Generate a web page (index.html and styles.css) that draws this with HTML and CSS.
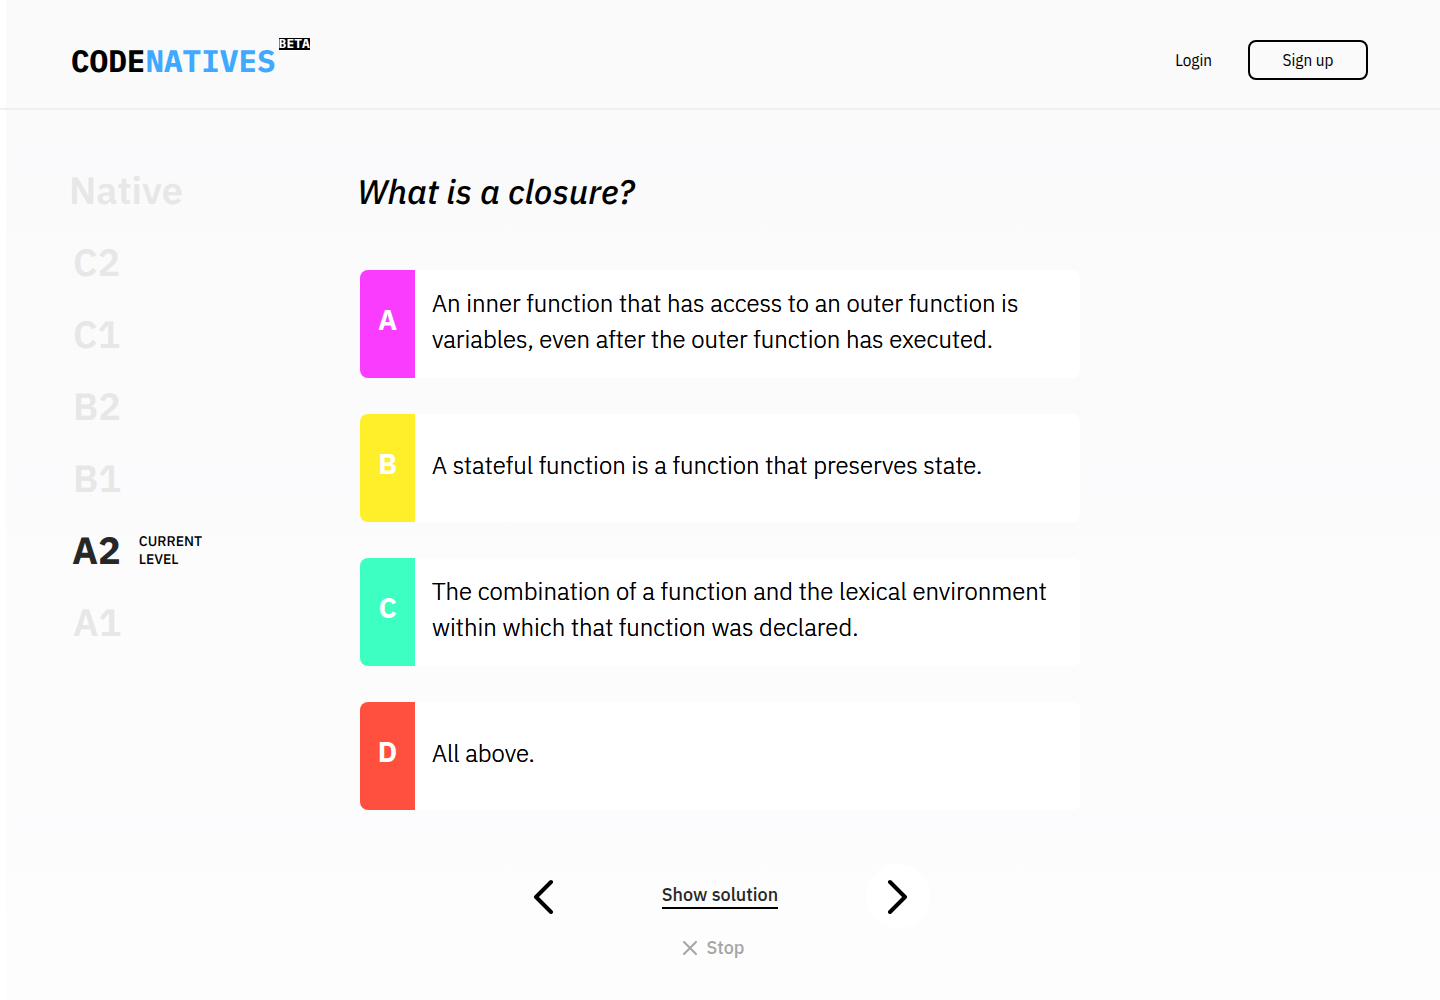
FILE: index.html
```html
<!DOCTYPE html>
<html lang="en">
<head>
<meta charset="utf-8">
<meta name="viewport" content="width=device-width, initial-scale=1">
<title>Code Natives</title>
<link rel="stylesheet" href="styles.css">
</head>
<body>
<header class="header">
  <a class="logo" href="#"><span class="logo-name">CODE<span class="logo-accent">NATIVES</span></span><span class="logo-beta">BETA</span></a>
  <nav class="account">
    <a class="login" href="#">Login</a>
    <button class="signup" type="button">Sign up</button>
  </nav>
</header>
<div class="layout">
  <aside>
    <ol class="levels">
      <li class="level level-native">Native</li>
      <li class="level">C2</li>
      <li class="level">C1</li>
      <li class="level">B2</li>
      <li class="level">B1</li>
      <li class="level level-current">A2 <span class="level-note">CURRENT LEVEL</span></li>
      <li class="level">A1</li>
    </ol>
  </aside>
  <main class="quiz">
    <h1 class="question">What is a closure?</h1>
    <div class="answers">
      <button class="answer" type="button"><span class="letter letter-a">A</span><span class="answer-text">An inner function that has access to an outer function is variables, even after the outer function has executed.</span></button>
      <button class="answer" type="button"><span class="letter letter-b">B</span><span class="answer-text">A stateful function is a function that preserves state.</span></button>
      <button class="answer" type="button"><span class="letter letter-c">C</span><span class="answer-text">The combination of a function and the lexical environment within which that function was declared.</span></button>
      <button class="answer" type="button"><span class="letter letter-d">D</span><span class="answer-text">All above.</span></button>
    </div>
    <div class="controls">
      <button class="arrow" type="button" aria-label="Previous question">
        <svg width="24" height="36" viewBox="0 0 24 36"><path d="M21 4 L6 19 L21 34" /></svg>
      </button>
      <button class="solution" type="button">Show solution</button>
      <button class="arrow arrow-next" type="button" aria-label="Next question">
        <svg width="24" height="36" viewBox="0 0 24 36"><path d="M4 4 L19 19 L4 34" /></svg>
      </button>
    </div>
    <button class="stop" type="button">
      <svg width="14" height="14" viewBox="0 0 14 14"><path d="M1 1 L13 13 M13 1 L1 13" /></svg>
      Stop
    </button>
  </main>
</div>
</body>
</html>
```
FILE: styles.css
```css
* {
  box-sizing: border-box;
}

body {
  margin: 0;
  min-height: 100vh;
  background:
    linear-gradient(to right, #fff 6px, transparent 6px),
    linear-gradient(#fafafa, #fafafc 16%, #fbfbfb 30%, #fbfbfd 48%, #fcfcfc 60%, #fcfcfe 82%, #fdfdfd 92%);
  color: #000;
  font-family: "IBM Plex Sans", Roboto, "Liberation Sans", sans-serif;
  text-rendering: geometricPrecision;
}

button {
  padding: 0;
  border: 0;
  background: none;
  color: inherit;
  font: inherit;
  cursor: pointer;
}

a {
  color: inherit;
  text-decoration: none;
}

.header {
  display: flex;
  justify-content: space-between;
  padding: 36px 72px 28px;
  border-bottom: 2px solid #f0f0f0;
}

.logo {
  display: flex;
  align-items: flex-start;
  gap: 3px;
  margin-left: -1px;
  font-family: "IBM Plex Mono", "Liberation Mono", monospace;
  font-weight: 700;
}

.logo-name {
  padding-top: 7px;
  font-size: 31px;
  line-height: 36px;
}

.logo-accent {
  color: #3fa9ff;
}

.logo-beta {
  margin-top: 2px;
  background: #000;
  color: #fff;
  font-size: 13px;
  line-height: 12px;
}

.account {
  display: flex;
  align-items: center;
  gap: 36px;
  padding-top: 4px;
  font-family: "IBM Plex Sans Condensed", "IBM Plex Sans", Roboto, sans-serif;
  font-size: 17px;
}

.signup {
  width: 120px;
  height: 40px;
  border: 2px solid #000;
  border-radius: 8px;
}

.layout {
  display: grid;
  grid-template-columns: 288px minmax(0, 720px);
  padding: 44px 72px 36px;
}

.levels {
  display: grid;
  gap: 36px;
  margin: 0;
  padding: 19px 0 0;
  list-style: none;
}

.level {
  display: flex;
  align-items: center;
  gap: 18px;
  height: 36px;
  padding-left: 1px;
  color: #e7e7e7;
  font-size: 38px;
  font-weight: 600;
  line-height: 36px;
}

.level-native {
  margin-left: -4px;
}

.level-current {
  padding-left: 0;
  color: #272727;
  font-weight: 700;
}

.level-note {
  width: 64px;
  padding-bottom: 2px;
  color: #000;
  font-size: 14px;
  font-weight: 500;
  line-height: 18px;
}

.question {
  margin: 0 0 56px -3px;
  padding-top: 16px;
  font-size: 34px;
  font-style: italic;
  font-weight: 500;
  line-height: 44px;
}

.answers {
  display: grid;
  gap: 36px;
}

.answer {
  display: flex;
  min-height: 108px;
  overflow: hidden;
  border-radius: 8px;
  background: #fff;
  text-align: left;
}

.letter {
  display: flex;
  flex: none;
  align-items: center;
  align-self: stretch;
  justify-content: center;
  width: 55px;
  padding-bottom: 10px;
  color: #fff;
  font-size: 28px;
  font-weight: 700;
}

.letter-a { background: #fa3cff; }
.letter-b { background: #ffee2a; }
.letter-c { background: #3cffc1; }
.letter-d { background: #ff503f; }

/* The zero-offset shadow firms up the thin strokes of the light weight. */
.answer-text {
  align-self: center;
  padding: 0 16px 6px 17px;
  font-size: 24px;
  font-weight: 300;
  line-height: 36px;
  text-shadow: 0 0 0 currentColor;
}

.controls {
  display: flex;
  align-items: center;
  justify-content: space-between;
  width: 420px;
  max-width: 100%;
  margin: 54px auto 0;
}

.arrow {
  display: grid;
  place-items: center;
  width: 64px;
  height: 64px;
  border-radius: 50%;
}

.arrow-next {
  background: #fff;
}

.arrow svg,
.stop svg {
  fill: none;
  stroke: currentColor;
  stroke-linecap: round;
  stroke-linejoin: round;
  stroke-width: 4;
}

.solution {
  border-bottom: 2px solid #000;
  color: #272727;
  font-size: 18px;
  font-weight: 500;
  line-height: 24px;
}

.stop {
  display: flex;
  align-items: center;
  gap: 9px;
  margin: 8px auto 0;
  padding-right: 12px;
  color: #a6a6a6;
  font-size: 18px;
  font-weight: 500;
  line-height: 24px;
}

.stop svg {
  stroke-width: 2;
}
```
